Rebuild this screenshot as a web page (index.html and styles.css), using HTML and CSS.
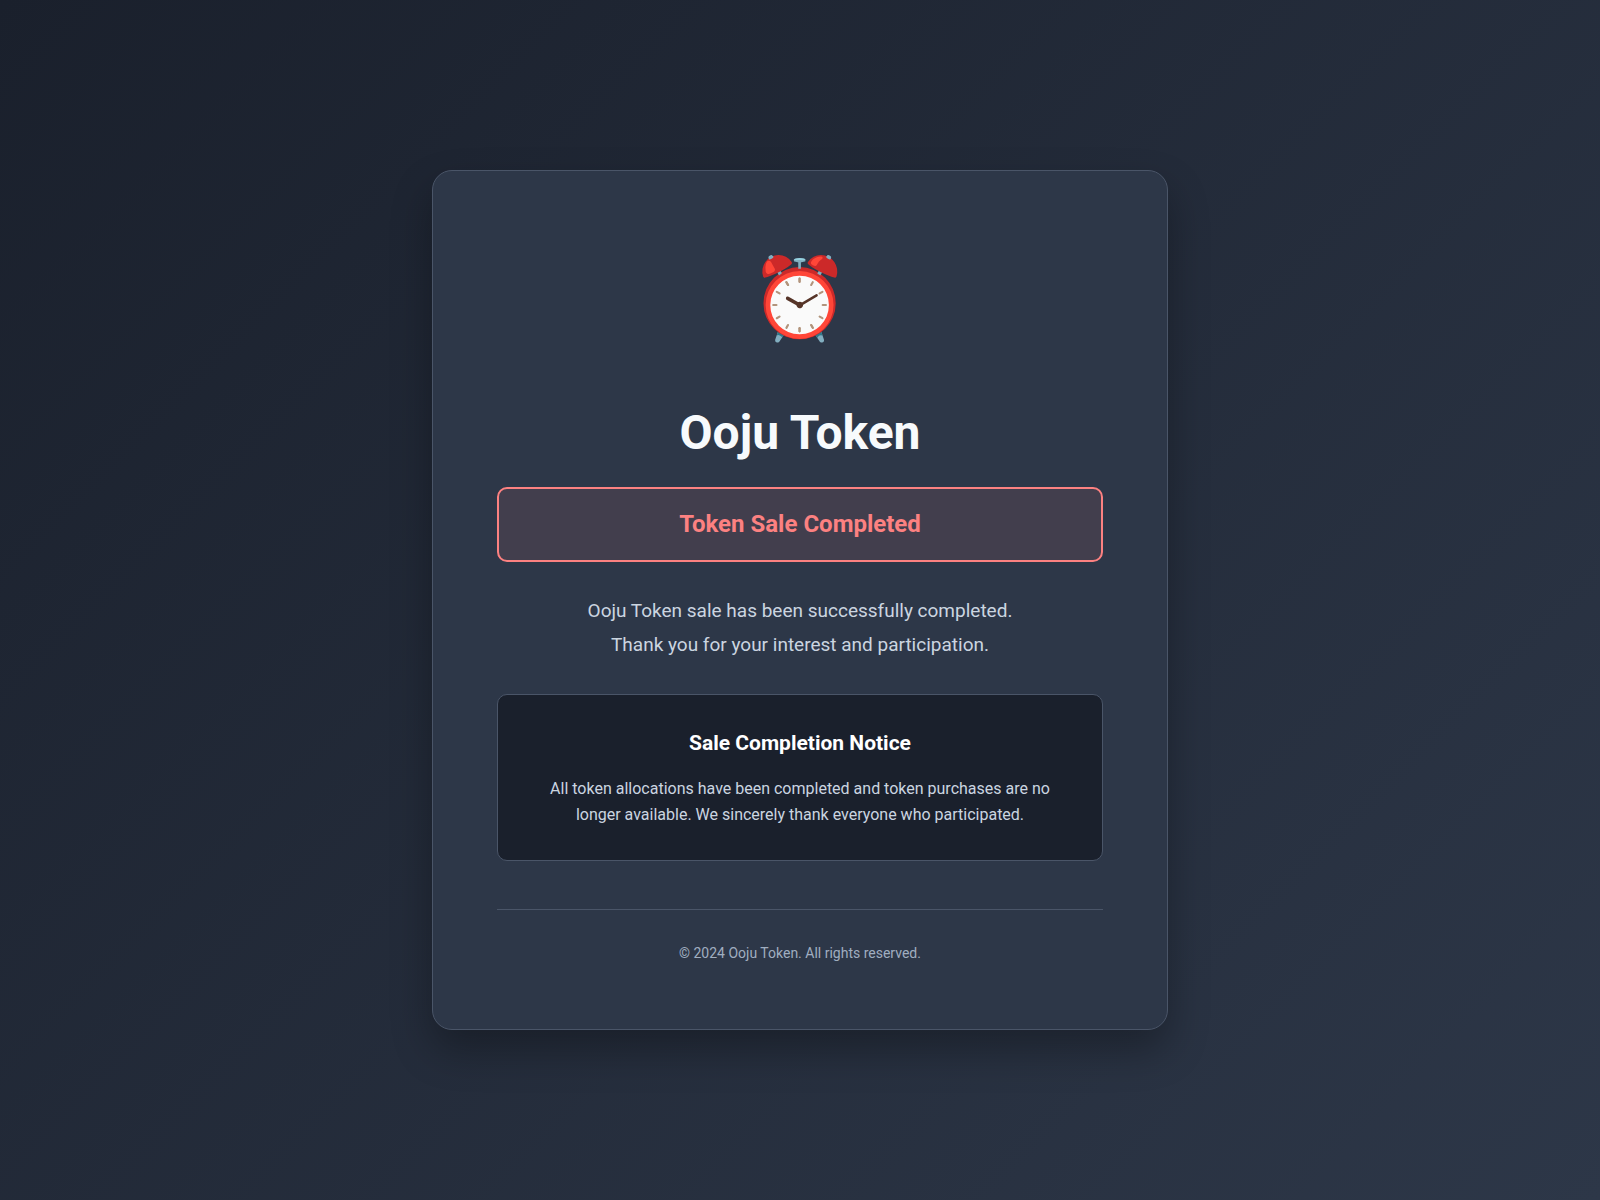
FILE: index.html
```html
<!DOCTYPE html>
<html lang="en">
<head>
<meta charset="utf-8">
<meta name="viewport" content="width=device-width, initial-scale=1">
<title>Ooju Token</title>
<link rel="stylesheet" href="styles.css">
</head>
<body>
<main class="container">
  <div class="icon">⏰</div>
  <h1 class="title">Ooju Token</h1>
  <div class="status">Token Sale Completed</div>
  <p class="message">Ooju Token sale has been successfully completed.<br>Thank you for your interest and participation.</p>
  <section class="notice">
    <h2 class="notice-title">Sale Completion Notice</h2>
    <p class="notice-text">All token allocations have been completed and token purchases are no longer available. We sincerely thank everyone who participated.</p>
  </section>
  <footer class="footer">© 2024 Ooju Token. All rights reserved.</footer>
</main>
</body>
</html>
```
FILE: styles.css
```css
* {
  margin: 0;
  padding: 0;
  box-sizing: border-box;
}

body {
  min-height: 100vh;
  display: flex;
  align-items: center;
  justify-content: center;
  padding: 20px;
  font-family: Roboto, sans-serif;
  line-height: 1.6;
  color: #fff;
  background: linear-gradient(135deg, #1a202c 0%, #2d3748 100%);
}

.container {
  width: 100%;
  max-width: 736px;
  padding: 64px;
  text-align: center;
  background: #2d3748;
  border: 1px solid #4a5568;
  border-radius: 20px;
  box-shadow: 0 20px 40px rgba(0, 0, 0, 0.3);
}

.icon {
  font-size: 80px;
  line-height: 128px;
  margin-bottom: 32px;
}

.title {
  font-size: 48px;
  font-weight: 700;
  line-height: 76px;
  margin-bottom: 16px;
  color: #f7fafc;
}

.status {
  padding: 16px 32px;
  margin-bottom: 32px;
  font-size: 24px;
  font-weight: 700;
  line-height: 39px;
  color: #fc8181;
  background: rgba(252, 129, 129, 0.1);
  border: 2px solid #fc8181;
  border-radius: 10px;
}

.message {
  margin-bottom: 32px;
  font-size: 19px;
  line-height: 34px;
  color: #cbd5e0;
}

.notice {
  padding: 32px;
  margin-bottom: 48px;
  background: #1a202c;
  border: 1px solid #4a5568;
  border-radius: 10px;
}

.notice-title {
  margin-bottom: 16px;
  font-size: 21px;
  font-weight: 700;
  line-height: 33px;
}

.notice-text {
  font-size: 16px;
  line-height: 26px;
  color: #cbd5e0;
}

.footer {
  padding-top: 32px;
  font-size: 14px;
  line-height: 23px;
  color: #a0aec0;
  border-top: 1px solid #4a5568;
}
```
